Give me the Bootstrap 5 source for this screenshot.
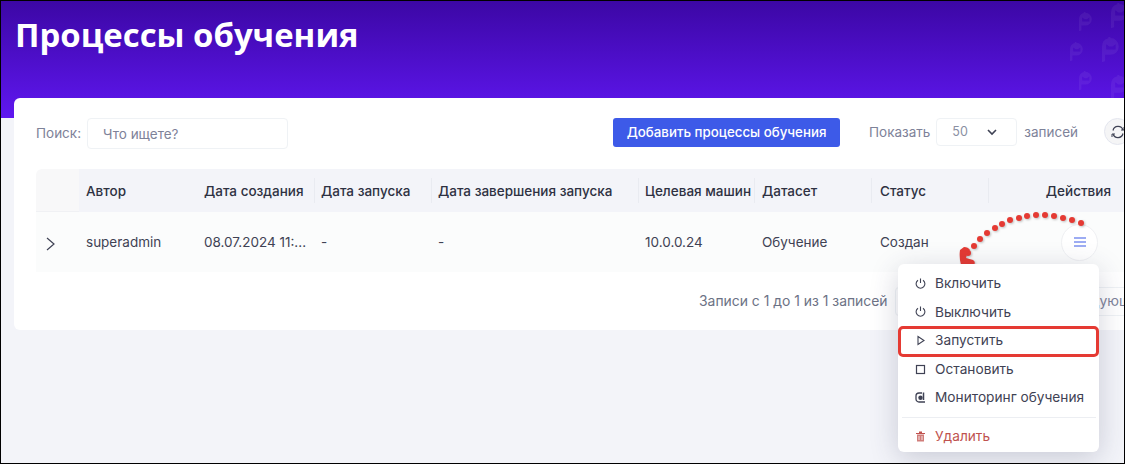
<!DOCTYPE html>
<html lang="ru">
<head>
    <meta charset="UTF-8">
    <title>Процессы обучения</title>
    <link href="https://cdn.jsdelivr.net/npm/bootstrap@5.3.0/dist/css/bootstrap.min.css" rel="stylesheet">
    <style>
        html, body { margin: 0; height: 100%; overflow: hidden; }
        body { font-family: Inter, "Liberation Sans", sans-serif; font-size: 13.5px; color: #3f4254; background: #f3f4f9; }
        .screen { position: relative; width: 1125px; height: 464px; overflow: hidden; border: 1px solid #000; background: #f3f4f9; }
        .hero { position: relative; height: 117px; padding: 14px 0 0 14px; background: linear-gradient(180deg, #3c07a5 0%, #5f17f0 100%); }
        .hero h1 { margin: 0; font: 700 32.9px/40px "Open Sans", "Noto Sans", sans-serif; color: #fff; }
        .hero-marks { position: absolute; left: 1060px; top: 0; }
        .sheet { position: relative; width: 1140px; height: 232px; margin: -20px 0 0 13px; background: #fff; border-radius: 6px; }
        .tools { height: 71px; padding: 20px 23px 0 22px; color: #7e8299; }
        .tools > * { flex: none; }
        .lbl-tall { height: 31px; }
        .lbl-mid { height: 29px; }
        .find-box { width: 201px; height: 31px; padding: 0 15px; margin-left: 6px; font-size: 13.5px; border: 1px solid #eff2f5; border-radius: 4px; }
        .find-box::placeholder { color: #7e8299; }
        .btn-add { width: 227px; height: 29px; margin-left: 325px; padding: 0; font-size: 13.3px; font-weight: 500; color: #fff; background: #3d5ae8; border: 0; border-radius: 3px; }
        .show-lbl { margin-left: 29px; }
        .size-box { width: 81px; height: 28px; margin: 0 7px 0 6px; padding: 0 19px 0 15px; font-size: 12.5px; color: #8a90a3; border: 1px solid #eff2f5; border-radius: 4px; }
        .refresh-btn { width: 27px; height: 27px; margin-left: 26px; padding-left: 6px; background: #f5f5f6; border: 1px solid #e4e6ef; border-radius: 50%; }
        .grid-tbl { table-layout: fixed; width: 1104px; margin: 0 0 0 22px; border-collapse: separate; border-spacing: 0; }
        .grid-tbl th { height: 43px; padding: 2px 7px 0; font-weight: 500; font-size: 13.5px; color: #2e3142; background: #f3f4f9; border: 0; white-space: nowrap; overflow: hidden; position: relative; }
        .grid-tbl th.sep::before { content: ""; position: absolute; left: 0; top: 9px; bottom: 9px; width: 1px; background: #e9ebf1; }
        .grid-tbl th.first-cell { background: #f8f8f9; border-top-left-radius: 6px; border-bottom: 1px solid #f0f1f4; }
        .grid-tbl td { height: 60px; padding: 1px 7px 0; vertical-align: middle; font-size: 13.5px; color: #3f4254; background: #fbfcfc; border: 0; white-space: nowrap; overflow: hidden; text-overflow: ellipsis; }
        .grid-tbl .pad-8 { padding-left: 8px; }
        .grid-tbl .pad-9 { padding-left: 9px; }
        .grid-tbl .end-head { padding-right: 29px; }
        .grid-tbl .end-cell { padding: 0 42px 0 0; }
        .circle-btn { display: flex; align-items: center; justify-content: center; width: 37px; height: 37px; margin: 0 0 0 auto; background: #fff; border: 1px solid #eff0f3; border-radius: 50%; }
        .pager-row { position: absolute; top: 189px; left: 685px; width: 500px; height: 29px; font-size: 13.9px; color: #6c7285; }
        .pager-box { flex: 1; height: 29px; margin-left: 7px; padding-left: 169px; border: 1px solid #eff2f5; border-radius: 4px; overflow: hidden; line-height: 27px; color: #7e8299; }
        .pop-menu { position: absolute; left: 897px; top: 263px; width: 201px; height: 188px; padding-top: 5px; font-size: 13.7px; background: #fff; border-radius: 6px; box-shadow: 0 6px 28px rgba(50, 55, 90, .22); color: #3f4254; }
        .pop-item { display: flex; align-items: center; height: 28.6px; padding-left: 17px; gap: 9px; }
        .pop-item svg { flex: none; }
        .pop-line { height: 1px; margin: 5px 3px 4px 4px; background: #eceef2; }
        .pop-danger { color: #c0524e; }
        .mark-frame { position: absolute; left: 897px; top: 325px; width: 201px; height: 31px; border: 3px solid #e53a33; border-radius: 5px; }
        .arrow-layer { position: absolute; left: 939px; top: 199px; filter: drop-shadow(1px 1px 1px rgba(0, 0, 0, .25)); }
    </style>
</head>
<body>
<div class="screen">
    <div class="hero">
        <h1>Процессы обучения</h1>
        <svg class="hero-marks" width="65" height="100" viewBox="0 0 65 100">
            <defs>
                <path id="markP" fill="#fff" fill-opacity=".06" fill-rule="evenodd" d="M0 9a8 8 0 0 1 6-7.700V0h2v1a8 8 0 1 1 0 16H3v6l-3 1zM4 7l3 2h3l3-2v5H4z"/>
            </defs>
            <use href="#markP" transform="translate(18 11) scale(.8)"/>
            <use href="#markP" transform="translate(9 41) scale(.8)"/>
            <use href="#markP" transform="translate(18 70) scale(.8)"/>
            <use href="#markP" transform="translate(50 2) scale(1.050)"/>
            <use href="#markP" transform="translate(41 36) scale(1.050)"/>
            <use href="#markP" transform="translate(50 74) scale(1.050)"/>
        </svg>
    </div>
    <div class="sheet">
        <div class="tools d-flex align-items-start">
            <span class="lbl-tall d-flex align-items-center">Поиск:</span>
            <input class="find-box" type="text" placeholder="Что ищете?">
            <button class="btn-add" type="button">Добавить процессы обучения</button>
            <span class="show-lbl lbl-mid d-flex align-items-center">Показать</span>
            <div class="size-box d-flex align-items-center justify-content-between">
                <span>50</span>
                <svg width="10" height="7" viewBox="0 0 10 7"><path d="M1 1l4 4 4-4" fill="none" stroke="#3f4254" stroke-width="1.600"/></svg>
            </div>
            <span class="lbl-mid d-flex align-items-center">записей</span>
            <div class="refresh-btn d-flex align-items-center">
                <svg width="14" height="14" viewBox="0 0 14 14"><path d="M2 5.500A5.200 5.200 0 0 1 12 5M12 8.500A5.200 5.200 0 0 1 2 9" fill="none" stroke="#3f4254" stroke-width="1.200"/><path d="M10 5h3V2M4 9H1v3" fill="none" stroke="#3f4254"/></svg>
            </div>
        </div>
        <table class="grid-tbl">
            <colgroup>
                <col style="width:43px"><col style="width:118px"><col style="width:117px"><col style="width:117px"><col style="width:207px"><col style="width:116px"><col style="width:117px"><col style="width:117px"><col>
            </colgroup>
            <thead>
                <tr>
                    <th class="first-cell"></th>
                    <th>Автор</th>
                    <th>Дата создания</th>
                    <th class="sep">Дата запуска</th>
                    <th class="sep">Дата завершения запуска</th>
                    <th class="sep">Целевая машин</th>
                    <th class="sep pad-8">Датасет</th>
                    <th class="sep pad-9">Статус</th>
                    <th class="sep text-end end-head">Действия</th>
                </tr>
            </thead>
            <tbody>
                <tr>
                    <td class="pad-9">
                        <svg width="12" height="16" viewBox="0 0 12 16"><path d="M2 2l7 6-7 6" fill="none" stroke="#3f4254" stroke-width="1.200"/></svg>
                    </td>
                    <td>superadmin</td>
                    <td>08.07.2024 11:...</td>
                    <td>-</td>
                    <td>-</td>
                    <td>10.0.0.24</td>
                    <td class="pad-8">Обучение</td>
                    <td class="pad-9">Создан</td>
                    <td class="end-cell">
                        <div class="circle-btn">
                            <svg width="12" height="10" viewBox="0 0 12 10"><path d="M0 1h12M0 5h12M0 9h12" stroke="#3d5ae8" stroke-width="1.200"/></svg>
                        </div>
                    </td>
                </tr>
            </tbody>
        </table>
        <div class="pager-row d-flex align-items-center">
            <span>Записи с 1 до 1 из 1 записей</span>
            <div class="pager-box">Следующая</div>
        </div>
    </div>
    <svg class="arrow-layer" width="150" height="75" viewBox="0 0 150 75">
        <g fill="#e53a33">
            <circle cx="141" cy="23" r="3"/><circle cx="132" cy="20" r="3"/><circle cx="123" cy="18" r="3"/><circle cx="114" cy="16" r="3"/><circle cx="105" cy="15" r="3"/><circle cx="96" cy="15" r="3"/><circle cx="87" cy="16" r="3"/><circle cx="79" cy="18" r="3"/><circle cx="70" cy="20" r="3"/><circle cx="62" cy="24" r="3"/><circle cx="55" cy="28" r="3"/><circle cx="47" cy="33" r="3"/><circle cx="40" cy="39" r="3"/><circle cx="34" cy="46" r="3"/><circle cx="28" cy="53" r="3"/>
            <path d="M20 50l4-3q4 0 6 3l-3 4-1 4 7 2q3 2 1 5H21q-2-7-1-15z"/>
        </g>
    </svg>
    <div class="pop-menu">
        <div class="pop-item">
            <svg width="11" height="11" viewBox="0 0 11 11"><path d="M3 2.200a4.400 4.400 0 1 0 5 0M5.500.5v4.500" fill="none" stroke="#3f4254" stroke-width="1.100"/></svg>Включить
        </div>
        <div class="pop-item">
            <svg width="11" height="11" viewBox="0 0 11 11"><path d="M3 2.200a4.400 4.400 0 1 0 5 0M5.500.5v4.500" fill="none" stroke="#3f4254" stroke-width="1.100"/></svg>Выключить
        </div>
        <div class="pop-item">
            <svg width="11" height="11" viewBox="0 0 11 11"><path d="M3 1.500 9 5.500 3 9.500z" fill="none" stroke="#3f4254" stroke-width="1.100"/></svg>Запустить
        </div>
        <div class="pop-item">
            <svg width="11" height="11" viewBox="0 0 11 11"><rect x="1.500" y="1.500" width="8" height="8" fill="none" stroke="#3f4254" stroke-width="1.200"/></svg>Остановить
        </div>
        <div class="pop-item">
            <svg width="11" height="11" viewBox="0 0 11 11"><path d="M10 10H4a3 3 0 0 1-3-3V4a3 3 0 0 1 3-3h3" fill="none" stroke="#3f4254" stroke-width="1.300"/><path d="M8.500.5V8" stroke="#3f4254" stroke-width="1.500"/><circle cx="5.500" cy="5.800" r="2.200" fill="#3f4254"/></svg>Мониторинг обучения
        </div>
        <div class="pop-line"></div>
        <div class="pop-item pop-danger">
            <svg width="11" height="11" viewBox="0 0 11 11"><path d="M1 2h9v1H1zM4 .5h3V2H4z" fill="#c0524e"/><path d="M2 3.500h7V10.500H2z" fill="#c0524e" fill-opacity=".75"/><path d="M4 5v4M7 5v4" stroke="#fff" stroke-width=".8"/></svg>Удалить
        </div>
    </div>
    <div class="mark-frame"></div>
</div>
<script src="https://cdn.jsdelivr.net/npm/bootstrap@5.3.0/dist/js/bootstrap.bundle.min.js"></script>
</body>
</html>
